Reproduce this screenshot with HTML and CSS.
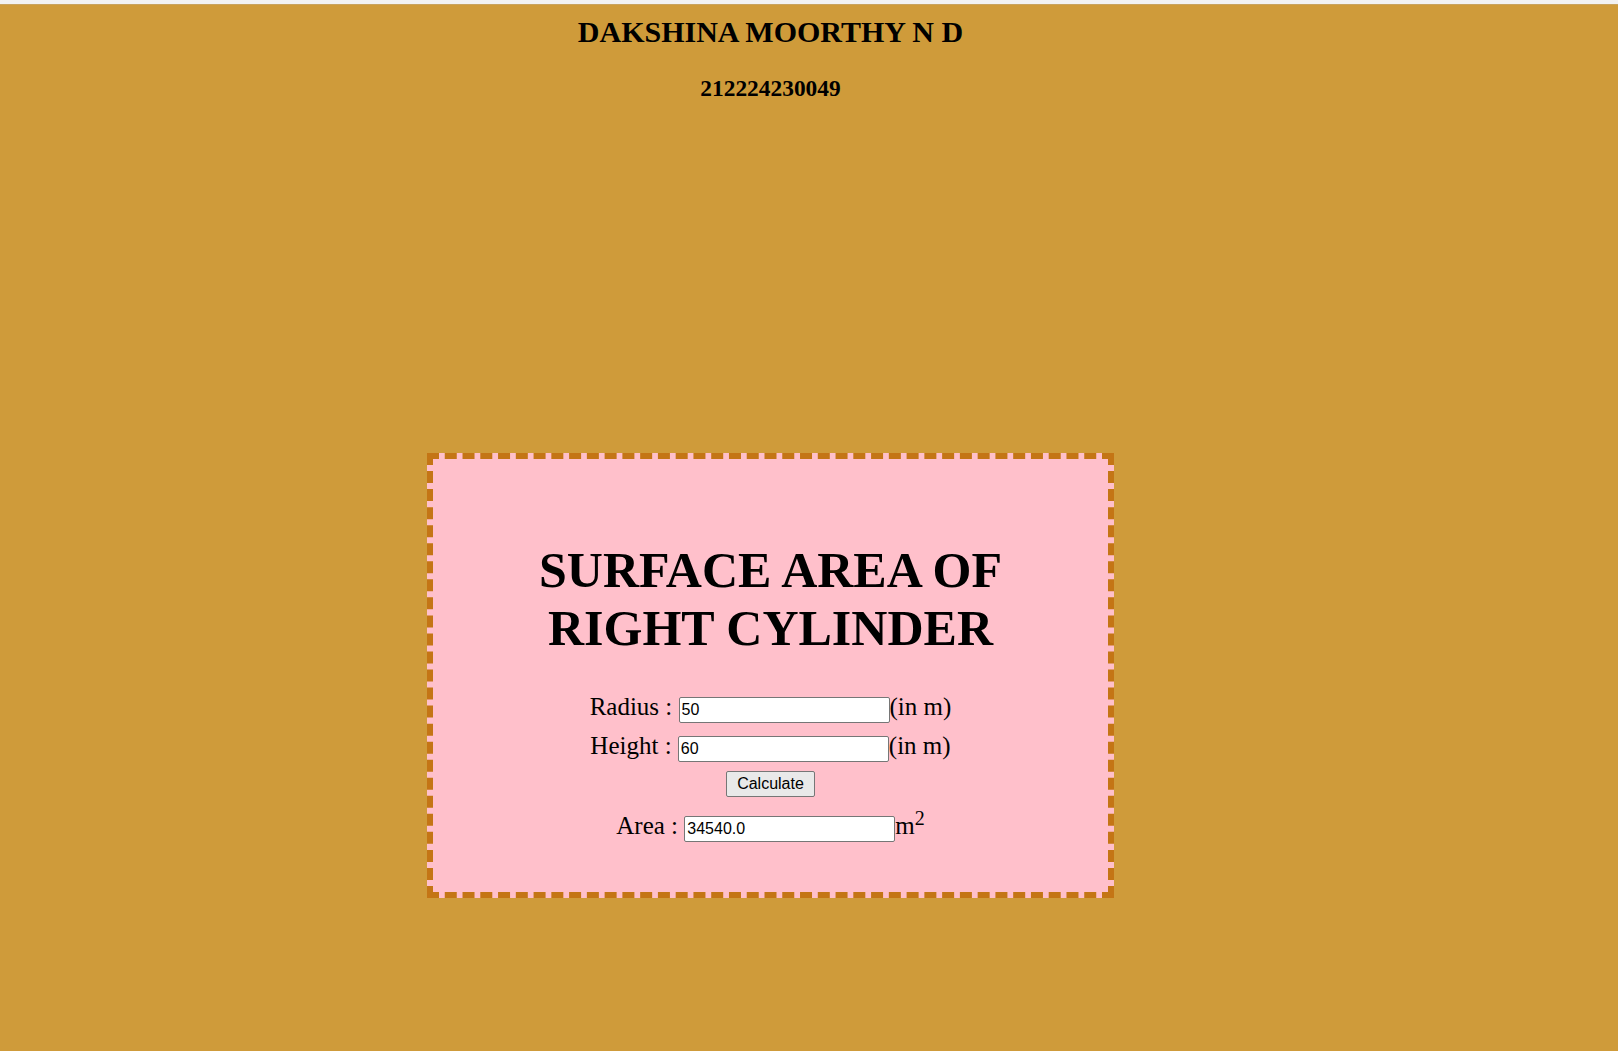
FILE: index.html
```html
<!DOCTYPE html>
<html>
<head>
<meta charset="utf-8">
<title>Surface Area of Right Cylinder</title>
<link rel="stylesheet" href="styles.css">
</head>
<body>
<div class="topstrip"></div>
<div class="page">
  <h1 class="name">DAKSHINA MOORTHY N D</h1>
  <h2 class="regno">212224230049</h2>
  <div class="card">
    <h1 class="title">SURFACE AREA OF RIGHT CYLINDER</h1>
    <div class="row">Radius : <input class="field" type="text" value="50">(in m)</div>
    <div class="row">Height : <input class="field" type="text" value="60">(in m)</div>
    <div class="btnrow"><button class="btn" type="button">Calculate</button></div>
    <div class="row">Area : <input class="field" type="text" value="34540.0">m<sup class="sq">2</sup></div>
  </div>
</div>
</body>
</html>
```
FILE: styles.css
```css
html, body {
  margin: 0;
  padding: 0;
}
body {
  background: #cf9b3a;
  font-family: "Liberation Serif", "Times New Roman", serif;
  color: #000;
  height: 1051px;
  overflow: hidden;
}
.topstrip {
  height: 4px;
  background: #f2f2f2;
  border-bottom: 1px solid #c9a35e;
}
.page {
  width: 1541px;
  text-align: center;
}
.name {
  margin: 9px 0 0;
  font-size: 30px;
  line-height: 35px;
  font-weight: bold;
}
.regno {
  margin: 25px 0 0;
  font-size: 23.4px;
  line-height: 28px;
  font-weight: bold;
}
.card {
  width: 675px;
  margin: 351px auto 0;
  border: 6px dashed #c47515;
  background: #ffc0cb;
  padding: 82px 0 47px;
}
.title {
  margin: 0 30px 30px;
  font-size: 50px;
  line-height: 58px;
  font-weight: bold;
}
.row {
  height: 39px;
  line-height: 39px;
  font-size: 25px;
  white-space: nowrap;
}
.field {
  box-sizing: border-box;
  width: 211px;
  height: 26px;
  padding: 1px 2px;
  border: 1px solid #767676;
  border-radius: 2px;
  background: #fff;
  font-family: "Liberation Sans", Arial, sans-serif;
  font-size: 16px;
  color: #000;
  vertical-align: baseline;
}
.btnrow {
  display: flex;
  justify-content: center;
  margin: 6px 0 9px;
}
.btn {
  box-sizing: border-box;
  height: 26px;
  padding: 1px 10px;
  border: 1px solid #767676;
  border-radius: 2px;
  background: #e9e9e9;
  font-family: "Liberation Sans", Arial, sans-serif;
  font-size: 16px;
  color: #000;
}
.sq {
  font-size: 20px;
  line-height: 0;
}
```
